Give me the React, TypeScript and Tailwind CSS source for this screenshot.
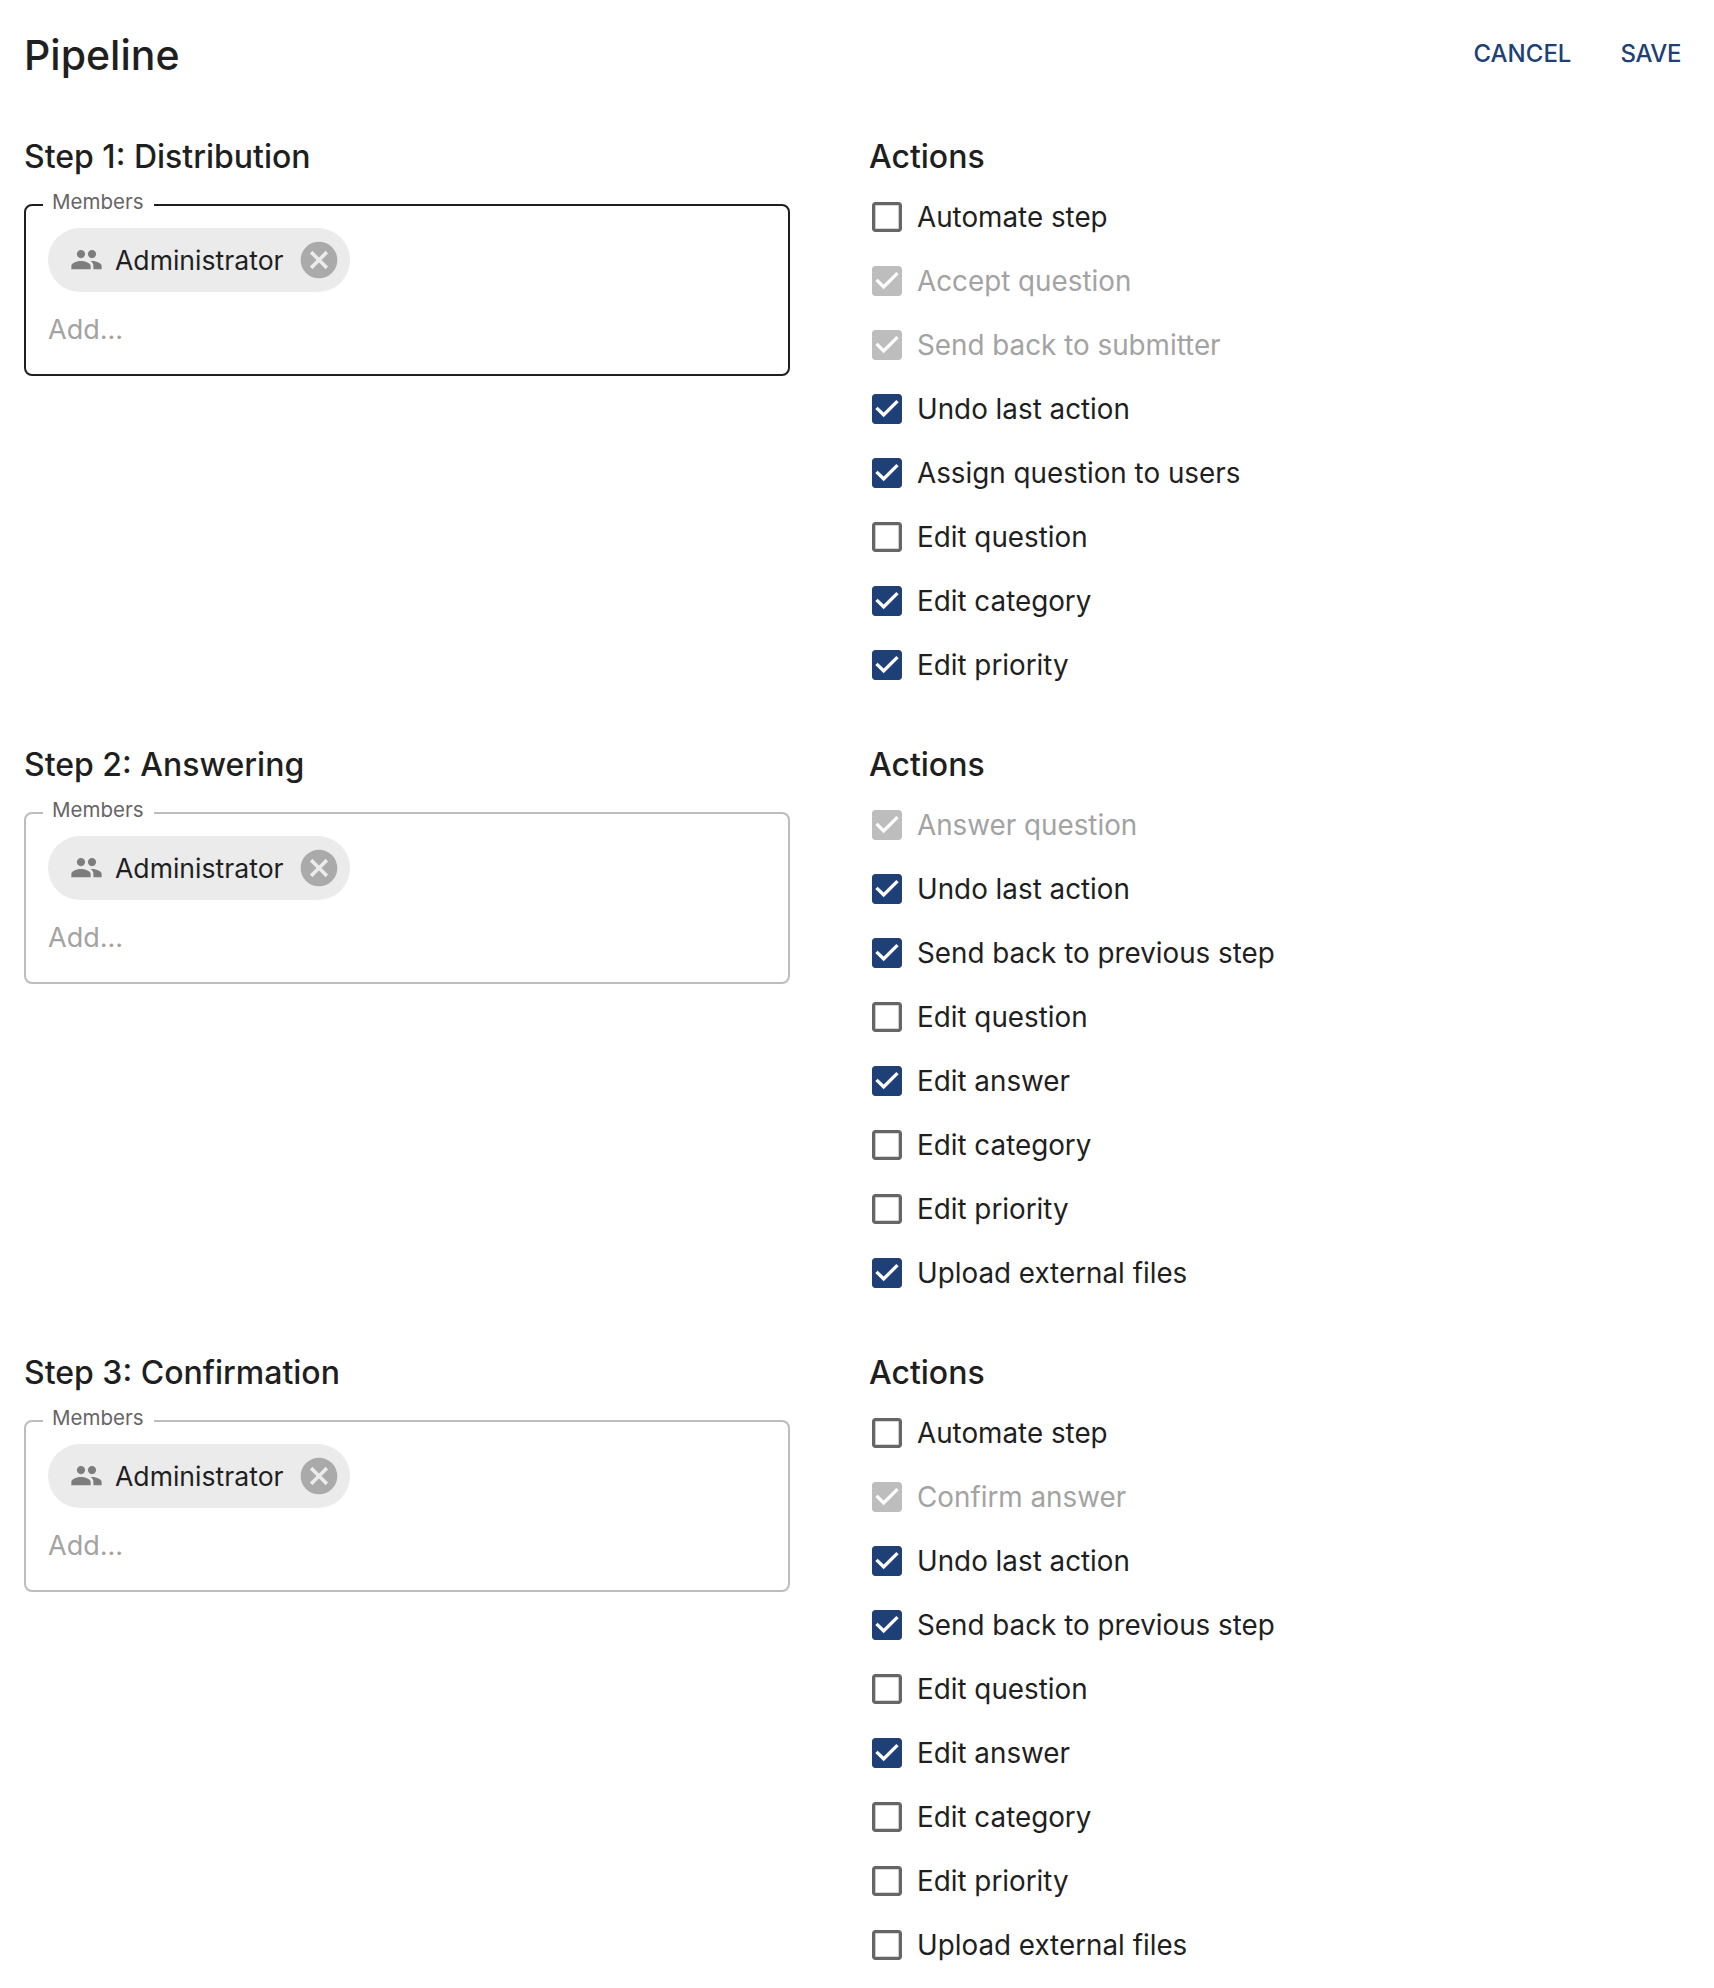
import React from 'react';

interface ActionItem {
  label: string;
  state: 'off' | 'on' | 'locked';
}

interface Step {
  title: string;
  focused?: boolean;
  actions: ActionItem[];
}

const steps: Step[] = [
  {
    title: 'Step 1: Distribution',
    focused: true,
    actions: [
      { label: 'Automate step', state: 'off' },
      { label: 'Accept question', state: 'locked' },
      { label: 'Send back to submitter', state: 'locked' },
      { label: 'Undo last action', state: 'on' },
      { label: 'Assign question to users', state: 'on' },
      { label: 'Edit question', state: 'off' },
      { label: 'Edit category', state: 'on' },
      { label: 'Edit priority', state: 'on' },
    ],
  },
  {
    title: 'Step 2: Answering',
    actions: [
      { label: 'Answer question', state: 'locked' },
      { label: 'Undo last action', state: 'on' },
      { label: 'Send back to previous step', state: 'on' },
      { label: 'Edit question', state: 'off' },
      { label: 'Edit answer', state: 'on' },
      { label: 'Edit category', state: 'off' },
      { label: 'Edit priority', state: 'off' },
      { label: 'Upload external files', state: 'on' },
    ],
  },
  {
    title: 'Step 3: Confirmation',
    actions: [
      { label: 'Automate step', state: 'off' },
      { label: 'Confirm answer', state: 'locked' },
      { label: 'Undo last action', state: 'on' },
      { label: 'Send back to previous step', state: 'on' },
      { label: 'Edit question', state: 'off' },
      { label: 'Edit answer', state: 'on' },
      { label: 'Edit category', state: 'off' },
      { label: 'Edit priority', state: 'off' },
      { label: 'Upload external files', state: 'off' },
    ],
  },
];

const CheckIcon = ({ state }: { state: ActionItem['state'] }) => {
  if (state === 'off') {
    return (
      <svg viewBox="0 0 24 24" className="w-10 h-10 shrink-0 fill-[#666666]">
        <path d="M19 5v14H5V5h14m0-2H5c-1.1 0-2 .9-2 2v14c0 1.1.9 2 2 2h14c1.1 0 2-.9 2-2V5c0-1.1-.9-2-2-2z" />
      </svg>
    );
  }
  return (
    <svg
      viewBox="0 0 24 24"
      className={`w-10 h-10 shrink-0 ${state === 'on' ? 'fill-[#1f3f77]' : 'fill-[#bdbdbd]'}`}
    >
      <path d="M19 3H5c-1.11 0-2 .9-2 2v14c0 1.1.89 2 2 2h14c1.1 0 2-.9 2-2V5c0-1.11-.9-2-2-2zm-9 14l-5-5 1.41-1.41L10 14.17l7.59-7.59L19 8l-9 9z" />
    </svg>
  );
};

const MembersBox = ({ focused }: { focused?: boolean }) => (
  <fieldset
    className={`mt-[4.5px] w-[766px] h-[186.5px] rounded-lg px-[22px] ${
      focused ? 'border-2 border-[#1f1f1f]' : 'border-2 border-[#bdbdbd]'
    }`}
  >
    <legend className="-ml-[5px] pl-[9px] pr-[11px] pb-[7px] text-[20.5px] leading-[24px] text-[#666666]">Members</legend>
    <div className="mt-[7px] flex h-16 w-[302px] items-center rounded-full bg-[#ebebeb] pl-[22px]">
      <svg viewBox="0 0 24 24" className="w-[33px] h-[33px] shrink-0 fill-[#7d7d7d]">
        <path d="M16 11c1.66 0 2.99-1.34 2.99-3S17.66 5 16 5c-1.66 0-3 1.34-3 3s1.34 3 3 3zm-8 0c1.66 0 2.99-1.34 2.99-3S9.66 5 8 5C6.34 5 5 6.34 5 8s1.34 3 3 3zm0 2c-2.33 0-7 1.17-7 3.5V19h14v-2.5c0-2.33-4.67-3.5-7-3.5zm8 0c-.29 0-.62.02-.97.05 1.16.84 1.97 1.97 1.97 3.45V19h6v-2.5c0-2.33-4.67-3.5-7-3.5z" />
      </svg>
      <span className="ml-[12px] text-[26.6px] leading-8 text-[#1f1f1f]">Administrator</span>
      <svg viewBox="0 0 24 24" className="ml-[13px] w-11 h-11 shrink-0 fill-[#aaaaaa]">
        <path d="M12 2C6.47 2 2 6.47 2 12s4.47 10 10 10 10-4.47 10-10S17.53 2 12 2zm5 13.59L15.59 17 12 13.41 8.41 17 7 15.59 10.59 12 7 8.41 8.41 7 12 10.59 15.59 7 17 8.41 13.41 12 17 15.59z" />
      </svg>
    </div>
    <div className="mt-[17px] text-[27px] leading-[42px] text-[#a3a3a3]">Add...</div>
  </fieldset>
);

export default function App() {
  return (
    <div className="min-h-[1988px] bg-white pl-6 font-['Inter',sans-serif] text-[#1f1f1f]">
      <header className="flex h-[128px] items-center justify-between pb-[16px] pr-[33px]">
        <h1 className="text-[41px] font-medium">Pipeline</h1>
        <div className="mb-[4px] flex gap-[49px] text-[24px] font-medium text-[#1f3f77]">
          <span>CANCEL</span>
          <span className="tracking-[-0.4px]">SAVE</span>
        </div>
      </header>
      {steps.map((step) => (
        <section key={step.title} className="grid h-[608px] grid-cols-[842.5px_1fr]">
          <div>
            <h2 className="text-[32px] leading-[57px] font-medium">{step.title}</h2>
            <MembersBox focused={step.focused} />
          </div>
          <div>
            <h2 className="ml-[2.5px] text-[32px] leading-[57px] font-medium">Actions</h2>
            <ul>
              {step.actions.map((action) => (
                <li key={action.label} className="flex h-16 items-center">
                  <CheckIcon state={action.state} />
                  <span
                    className={`ml-[10.5px] pt-[1px] text-[27.8px] ${
                      action.state === 'locked' ? 'text-[#a3a3a3]' : 'text-[#1f1f1f]'
                    }`}
                  >
                    {action.label}
                  </span>
                </li>
              ))}
            </ul>
          </div>
        </section>
      ))}
    </div>
  );
}
